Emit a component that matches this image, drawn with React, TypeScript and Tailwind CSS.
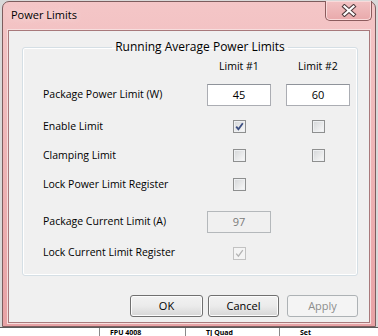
import React from 'react';

function Check({ on, disabled }: { on?: boolean; disabled?: boolean }) {
    return (
        <div
            className={
                'flex h-[13px] w-[13px] items-center justify-center border ' +
                (disabled
                    ? 'border-[#c2c2c2] bg-[#f4f4f4]'
                    : 'border-[#8e8f8f] bg-gradient-to-br from-[#d4d6d8] to-[#fafafa] shadow-[inset_0_0_0_1px_#eef0f2]')
            }
        >
            {on && (
                <svg width="9" height="9" viewBox="0 0 9 9">
                    <path
                        d="M1.2 4.6 L3.4 7.2 L7.8 1.2"
                        fill="none"
                        stroke={disabled ? '#b4b4b4' : '#3c4f82'}
                        strokeWidth={disabled ? 1.3 : 1.8}
                    />
                </svg>
            )}
        </div>
    );
}

function Field({ value, disabled }: { value: string; disabled?: boolean }) {
    return (
        <div
            className={
                'flex h-[22px] w-[64px] items-center justify-center border text-[11px] ' +
                (disabled
                    ? 'border-[#b4b8bb] bg-[#f0f0f0] text-[#7a7a7a]'
                    : 'border-[#abadb3] border-t-[#8f939a] bg-white text-black')
            }
        >
            {value}
        </div>
    );
}

function Row({ label, h, c1, c2 }: { label: string; h: string; c1?: React.ReactNode; c2?: React.ReactNode }) {
    return (
        <div className={'grid grid-cols-[149px_64px_64px] items-center gap-x-[15px] ' + h}>
            <div className="whitespace-nowrap">{label}</div>
            <div className="flex justify-center">{c1}</div>
            <div className="flex justify-center">{c2}</div>
        </div>
    );
}

function Btn({ children, w, disabled }: { children: React.ReactNode; w: string; disabled?: boolean }) {
    return (
        <div
            className={
                'flex h-[22px] items-center justify-center rounded-[3px] border text-[11px] ' +
                w +
                ' ' +
                (disabled
                    ? 'border-[#adb2b5] bg-[#f4f4f4] text-[#8d8d8d]'
                    : 'border-[#707070] bg-gradient-to-b from-[#f2f2f2] via-[#ebebeb] to-[#d6d6d6] text-black shadow-[inset_0_0_0_1px_#fcfcfc]')
            }
        >
            {children}
        </div>
    );
}

export default function App() {
    return (
        <div className="flex h-[336px] w-[378px] flex-col overflow-hidden bg-[#d9d9d9] font-['Open_Sans',sans-serif] text-[10.5px] text-black">
            <div className="ml-[2px] mt-[1px] flex h-[326px] w-[374px] shrink-0 flex-col rounded-t-[7px] border border-[#7d5d5e] bg-gradient-to-b from-[#f4c6c7] via-[#eeb3b5] to-[#e8a2a5] pb-[3px]">
                <div className="relative flex h-[28px] shrink-0 items-center pl-[8px] pb-[2px]">
                    <span className="text-[11px] text-black [text-shadow:0_0_6px_#fbe8e8]">Power Limits</span>
                    <div className="absolute right-[3px] top-[-1px] flex h-[20px] w-[47px] items-center justify-center rounded-b-[5px] border border-t-0 border-[#8b5b5d] bg-gradient-to-b from-[#f2c2c3] to-[#e9a9ab] shadow-[inset_0_0_0_1px_#f9dada]">
                        <svg width="16" height="13" viewBox="0 0 16 13">
                            <path d="M3.5 2.5 L12.5 10.5 M12.5 2.5 L3.5 10.5" stroke="#4e3a3c" strokeWidth="4.2" strokeLinecap="square" />
                            <path d="M3.5 2.5 L12.5 10.5 M12.5 2.5 L3.5 10.5" stroke="#ffffff" strokeWidth="2.2" strokeLinecap="square" />
                        </svg>
                    </div>
                </div>
                <div className="mx-[5px] flex min-h-0 flex-1 flex-col border border-[#a8797b] bg-[#f0f0f0] pt-[7px] shadow-[0_0_0_1px_#f7dede]">
                    <fieldset className="ml-[13px] w-[336px] rounded-[3px] border border-[#d5dfe5] pb-[14px] pl-[20px] shadow-[inset_0_0_0_1px_#ffffff]">
                        <legend className="mx-auto h-[18px] px-[3px] text-[12px] leading-[18px]">Running Average Power Limits</legend>
                        <Row label="" h="h-[22px]" c1={<span>Limit #1</span>} c2={<span>Limit #2</span>} />
                        <Row label="Package Power Limit (W)" h="h-[34px]" c1={<Field value="45" />} c2={<Field value="60" />} />
                        <Row label="Enable Limit" h="h-[29px]" c1={<Check on />} c2={<Check />} />
                        <Row label="Clamping Limit" h="h-[29px]" c1={<Check />} c2={<Check />} />
                        <Row label="Lock Power Limit Register" h="h-[29px]" c1={<Check />} />
                        <Row label="Package Current Limit (A)" h="h-[46px]" c1={<Field value="97" disabled />} />
                        <Row label="Lock Current Limit Register" h="h-[16px]" c1={<Check on disabled />} />
                    </fieldset>
                    <div className="mt-[19px] flex justify-end pr-[11px]">
                        <Btn w="w-[73px]">OK</Btn>
                        <div className="w-[5px]" />
                        <Btn w="w-[71px]">Cancel</Btn>
                        <div className="w-[8px]" />
                        <Btn w="w-[71px]" disabled>Apply</Btn>
                    </div>
                </div>
            </div>
            <div className="flex flex-1 items-center border-t border-[#5a5a5a] bg-white text-[7px] font-bold leading-[7px]">
                <div className="h-full w-[100px] border-r border-[#8a8a8a]" />
                <div className="flex h-full w-[86px] items-center border-r border-[#8a8a8a] pl-[10px]">FPU 4008</div>
                <div className="flex h-full w-[94px] items-center border-r border-[#8a8a8a] pl-[20px]">TJ Quad</div>
                <div className="flex h-full flex-1 items-center pl-[20px]">Set</div>
            </div>
        </div>
    );
}
